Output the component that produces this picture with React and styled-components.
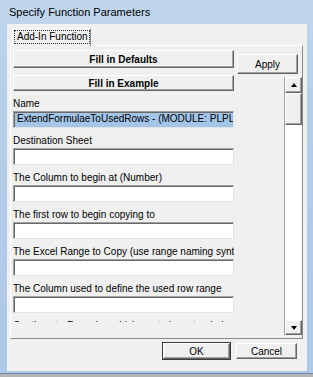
import React from 'react';
import styled, { createGlobalStyle } from 'styled-components';

const GlobalStyle = createGlobalStyle`
  html, body {
    margin: 0;
    padding: 0;
    background: #b4b4b4;
  }
  body {
    font-family: "Liberation Sans", Arial, sans-serif;
    font-size: 10px;
    color: #000;
  }
`;

const Window = styled.div`
  width: 313px;
  height: 374px;
  display: flex;
  flex-direction: column;
  box-sizing: border-box;
  background: linear-gradient(to bottom, #bfd6ee 0%, #b6cde8 30%, #adc8e8 100%);
  border-bottom: 1px solid #6f89a8;
`;

const TitleBar = styled.div`
  height: 24px;
  flex: none;
  padding: 1px 0 0 9px;
  box-sizing: border-box;
  font-size: 11px;
  line-height: 23px;
  color: #000;
`;

const Client = styled.div`
  flex: 1;
  margin: 0 6px 2px 7px;
  padding: 4px 4px 0 3px;
  background: #f0f0f0;
  display: flex;
  flex-direction: column;
`;

const TabRow = styled.div`
  display: flex;
  padding-left: 2px;
  height: 17px;
`;

const Tab = styled.div`
  position: relative;
  z-index: 1;
  width: 79px;
  height: 18px;
  box-sizing: border-box;
  background: #f0f0f0;
  border-style: solid;
  border-width: 1px 1px 0 1px;
  border-color: #fff #8a8a8a #f0f0f0 #fff;
  padding: 1px 0 0 1px;
`;

const FocusLabel = styled.span`
  display: block;
  border: 1px dotted #333;
  height: 14px;
  box-sizing: border-box;
  line-height: 12px;
  padding-left: 2px;
  width: 76px;
  white-space: nowrap;
  overflow: hidden;
`;

const Panel = styled.div`
  height: 294px;
  box-sizing: border-box;
  border-style: solid;
  border-width: 1px;
  border-color: #fff #8a8a8a #8a8a8a #fff;
  padding: 4px 0 0 2px;
  display: flex;
  flex-direction: column;
`;

const TopRow = styled.div`
  display: flex;
  align-items: flex-start;
  height: 24px;
`;

const RaisedButton = styled.div`
  box-sizing: border-box;
  width: ${(p) => p.w}px;
  height: ${(p) => p.h}px;
  margin-top: ${(p) => p.top || 0}px;
  margin-left: ${(p) => p.left || 0}px;
  background: #f0f0f0;
  border-style: solid;
  border-width: 1px;
  border-color: #fff #646464 #646464 #fff;
  box-shadow: inset -1px -1px 0 #a0a0a0;
  display: flex;
  align-items: center;
  justify-content: center;
  font-weight: ${(p) => (p.bold ? 700 : 400)};
  font-size: 10px;
  white-space: nowrap;
`;

const DefaultButton = styled(RaisedButton)`
  outline: 1px solid #3c3c3c;
  outline-offset: 0;
`;

const Lower = styled.div`
  display: flex;
  margin-top: 1px;
`;

const FormCol = styled.div`
  width: 221px;
  display: flex;
  flex-direction: column;
`;

const FieldList = styled.div`
  height: 231px;
  overflow: hidden;
  padding-top: 6px;
  box-sizing: border-box;
`;

const Group = styled.div`
  margin-bottom: 6px;
`;

const Label = styled.div`
  height: 14px;
  line-height: 14px;
  white-space: nowrap;
  overflow: hidden;
  width: 221px;
`;

const Field = styled.div`
  height: 17px;
  width: 221px;
  box-sizing: border-box;
  border-style: solid;
  border-width: 1px;
  border-color: #a0a0a0 #e3e3e3 #e3e3e3 #a0a0a0;
  box-shadow: inset 1px 1px 0 #696969;
  background: ${(p) => (p.selected ? '#a3c5e8' : '#fff')};
  padding: 0 0 0 3px;
  line-height: 14px;
  white-space: nowrap;
  overflow: hidden;
`;

const ScrollBar = styled.div`
  margin-left: auto;
  margin-top: 2px;
  width: 18px;
  height: 258px;
  box-sizing: border-box;
  border-left: 1px solid #a0a0a0;
  background: #fff;
  display: flex;
  flex-direction: column;
`;

const ScrollButton = styled.div`
  height: ${(p) => p.h}px;
  box-sizing: border-box;
  background: #f0f0f0;
  border-style: solid;
  border-width: 1px;
  border-color: #fff #646464 #646464 #fff;
  box-shadow: inset -1px -1px 0 #a0a0a0;
  display: flex;
  align-items: center;
  justify-content: center;
`;

const Arrow = styled.span`
  width: 0;
  height: 0;
  border-left: 3.5px solid transparent;
  border-right: 3.5px solid transparent;
  ${(p) =>
    p.down ? 'border-top: 4px solid #000;' : 'border-bottom: 4px solid #000;'}
`;

const Track = styled.div`
  flex: 1;
  background: #fff;
`;

const ButtonRow = styled.div`
  display: flex;
  justify-content: flex-end;
  gap: 6px;
  margin-top: 4px;
  padding-right: 6px;
`;

const fields = [
  { label: 'Name', value: 'ExtendFormulaeToUsedRows - (MODULE: PLPLOT)', selected: true },
  { label: 'Destination Sheet' },
  { label: 'The Column to begin at (Number)' },
  { label: 'The first row to begin copying to' },
  { label: 'The Excel Range to Copy (use range naming syntax)' },
  { label: 'The Column used to define the used row range' },
  { label: 'Continue to Formulae which are to be extended' },
];

export default function App() {
  return (
    <>
      <GlobalStyle />
      <Window>
        <TitleBar>Specify Function Parameters</TitleBar>
        <Client>
          <TabRow>
            <Tab>
              <FocusLabel>Add-In Function</FocusLabel>
            </Tab>
          </TabRow>
          <Panel>
            <TopRow>
              <RaisedButton w={221} h={18} bold>
                Fill in Defaults
              </RaisedButton>
              <RaisedButton w={61} h={20} top={4} left={3}>
                Apply
              </RaisedButton>
            </TopRow>
            <Lower>
              <FormCol>
                <RaisedButton w={221} h={16} bold>
                  Fill in Example
                </RaisedButton>
                <FieldList>
                  {fields.map((f) => (
                    <Group key={f.label}>
                      <Label>{f.label}</Label>
                      <Field selected={f.selected}>{f.value}</Field>
                    </Group>
                  ))}
                </FieldList>
              </FormCol>
              <ScrollBar>
                <ScrollButton h={16}>
                  <Arrow />
                </ScrollButton>
                <ScrollButton h={32} />
                <Track />
                <ScrollButton h={15}>
                  <Arrow down />
                </ScrollButton>
              </ScrollBar>
            </Lower>
          </Panel>
          <ButtonRow>
            <DefaultButton w={67} h={16}>
              OK
            </DefaultButton>
            <RaisedButton w={61} h={16}>
              Cancel
            </RaisedButton>
          </ButtonRow>
        </Client>
      </Window>
    </>
  );
}
